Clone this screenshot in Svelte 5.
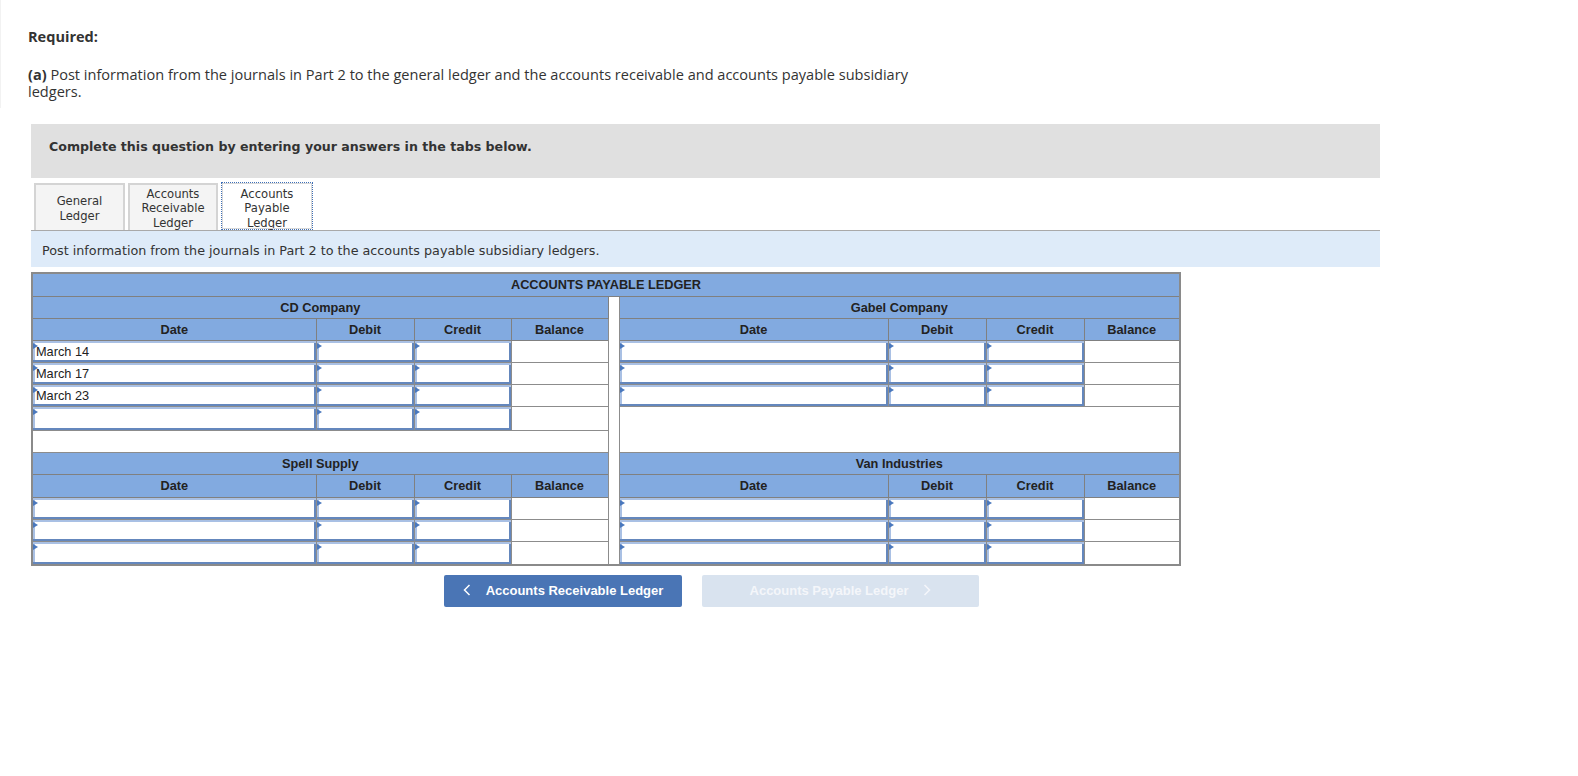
<script>
  const cols = ['Date', 'Debit', 'Credit', 'Balance'];
  const topRows = ['March 14', 'March 17', 'March 23'];
  const lowerRows = ['', '', ''];
</script>

{#snippet heads()}
  {#each cols as c}
    <th class="head">{c}</th>
  {/each}
{/snippet}

{#snippet entry(value)}
  <td class="cell entry"><i class="mark"></i>{value}</td>
{/snippet}

{#snippet group(date)}
  {@render entry(date)}
  {@render entry('')}
  {@render entry('')}
  <td class="cell"></td>
{/snippet}

<div class="page">
  <div class="intro">
    <p class="req">Required:</p>
    <p class="part"><b>(a)</b> Post information from the journals in Part 2 to the general ledger and the accounts receivable and accounts payable subsidiary ledgers.</p>
  </div>

  <div class="question">
    <div class="banner">Complete this question by entering your answers in the tabs below.</div>

    <div class="tabs">
      <button class="tab">General<br />Ledger</button>
      <button class="tab three">Accounts<br />Receivable<br />Ledger</button>
      <button class="tab active">Accounts<br />Payable<br />Ledger</button>
    </div>

    <div class="hint">Post information from the journals in Part 2 to the accounts payable subsidiary ledgers.</div>

    <table class="ledger">
      <colgroup>
        <col class="c284" />
        <col class="c98" />
        <col class="c97" />
        <col class="c97" />
        <col class="c11" />
        <col class="c269" />
        <col class="c98" />
        <col class="c98" />
        <col class="c96" />
      </colgroup>
      <tbody>
        <tr class="r23"><th class="head" colspan="9">ACCOUNTS PAYABLE LEDGER</th></tr>
        <tr class="r22">
          <th class="head" colspan="4">CD Company</th>
          <td class="cell" rowspan="12"></td>
          <th class="head" colspan="4">Gabel Company</th>
        </tr>
        <tr class="r22">
          {@render heads()}
          {@render heads()}
        </tr>
        {#each topRows as date}
          <tr class="r22">
            {@render group(date)}
            {@render group('')}
          </tr>
        {/each}
        <tr class="r24">
          {@render group('')}
          <td class="cell" colspan="4" rowspan="2"></td>
        </tr>
        <tr class="r22"><td class="cell" colspan="4"></td></tr>
        <tr class="r22">
          <th class="head" colspan="4">Spell Supply</th>
          <th class="head" colspan="4">Van Industries</th>
        </tr>
        <tr class="r23">
          {@render heads()}
          {@render heads()}
        </tr>
        {#each lowerRows as date, i}
          <tr class={i === 2 ? 'r24' : 'r22'}>
            {@render group(date)}
            {@render group('')}
          </tr>
        {/each}
      </tbody>
    </table>

    <div class="nav">
      <button class="btn prev">
        <svg width="8" height="12" viewBox="0 0 8 12" fill="none" stroke="currentColor" stroke-width="1.5"><path d="M6.5 1L1.5 6l5 5"></path></svg>
        Accounts Receivable Ledger
      </button>
      <button class="btn next" disabled>
        Accounts Payable Ledger
        <svg width="8" height="12" viewBox="0 0 8 12" fill="none" stroke="currentColor" stroke-width="1.5"><path d="M1.5 1l5 5-5 5"></path></svg>
      </button>
    </div>
  </div>
</div>

<style>
  :global(body) {
    background: #fff;
  }

  .page {
    width: 1578px;
    height: 776px;
    overflow: hidden;
    box-sizing: border-box;
    color: #333;
  }

  .intro {
    width: 930px;
    height: 108px;
    box-sizing: border-box;
    padding: 28px 0 0 27px;
    border-left: 1px solid #f2f2f2;
    margin-bottom: 16px;
    font-family: "Open Sans", sans-serif;
    font-size: 14.55px;
    line-height: 17px;
  }

  .intro p {
    margin: 0;
  }

  .req {
    font-weight: 700;
    margin-bottom: 21px !important;
  }

  .part b {
    font-weight: 700;
  }

  .question {
    padding-left: 31px;
  }

  .banner {
    width: 1349px;
    height: 54px;
    box-sizing: border-box;
    padding: 14px 18px 0;
    background: #e0e0e0;
    font-family: "DejaVu Sans", sans-serif;
    font-size: 12.6px;
    font-weight: 700;
    line-height: 17px;
    color: #333;
  }

  .tabs {
    display: flex;
    gap: 3px;
    width: 1349px;
    height: 53px;
    box-sizing: border-box;
    padding: 5px 0 0 3px;
    border-bottom: 1px solid #a9a9a9;
  }

  .tab {
    width: 90px;
    height: 47px;
    padding: 3px 0 0;
    box-sizing: border-box;
    border: 2px solid #d4d4d4;
    border-bottom: none;
    background: #f4f4f4;
    font-family: "DejaVu Sans", sans-serif;
    font-size: 11.6px;
    line-height: 14.6px;
    color: #333;
  }

  .tab:first-child {
    width: 91px;
  }

  .tab.three {
    padding-top: 2px;
    line-height: 14.4px;
  }

  .tab.active {
    width: 92px;
    height: 48px;
    margin-top: -1px;
    padding-top: 4px;
    line-height: 14.4px;
    background: #fff;
    border: 1px dotted #3f6fb5;
    outline: 1px solid #d8d8d8;
    outline-offset: -2px;
  }

  .hint {
    width: 1349px;
    height: 36px;
    box-sizing: border-box;
    padding: 11px 11px 0;
    background: #deebf9;
    font-family: "DejaVu Sans", sans-serif;
    font-size: 12.75px;
    line-height: 17px;
    color: #333;
    margin-bottom: 5px;
  }

  .ledger {
    width: 1149px;
    table-layout: fixed;
    border-collapse: collapse;
    border: 2px solid #8a8a8a;
    font-family: "Liberation Sans", sans-serif;
    font-size: 12.75px;
    color: #222;
  }

  .c284 { width: 284px; }
  .c98 { width: 98px; }
  .c97 { width: 97px; }
  .c96 { width: 96px; }
  .c11 { width: 11px; }
  .c269 { width: 269px; }

  .r22 { height: 22px; }
  .r23 { height: 23px; }
  .r24 { height: 24px; }

  .head {
    padding: 0;
    background: #82aae0;
    border: 1px solid #808080;
    font-weight: 700;
    text-align: center;
    color: #222;
  }

  .cell {
    padding: 0;
    background: #fff;
    border: 1px solid #8c8c8c;
  }

  .entry {
    position: relative;
    padding-left: 3px;
    color: #222;
    box-shadow:
      inset 0 -2px 0 #6487bd,
      inset 0 2px 0 #a9c0e4,
      inset 2px 0 0 #a9c0e4,
      inset -2px 0 0 #6487bd;
  }

  .mark {
    position: absolute;
    left: 0;
    top: 2px;
    width: 0;
    height: 0;
    border-left: 5px solid #4a78bd;
    border-top: 3.5px solid transparent;
    border-bottom: 3.5px solid transparent;
  }

  .nav {
    display: flex;
    gap: 20px;
    padding: 9px 0 0 413px;
  }

  .btn {
    height: 32px;
    padding: 0 0 2px;
    border: none;
    border-radius: 2px;
    display: flex;
    align-items: center;
    justify-content: center;
    gap: 15px;
    font-family: "Liberation Sans", sans-serif;
    font-size: 13px;
    font-weight: 700;
    color: #fff;
  }

  .prev {
    width: 238px;
    background: #4a75b5;
  }

  .next {
    width: 277px;
    background: #d9e3ef;
    color: #f4f6fa;
  }
</style>
